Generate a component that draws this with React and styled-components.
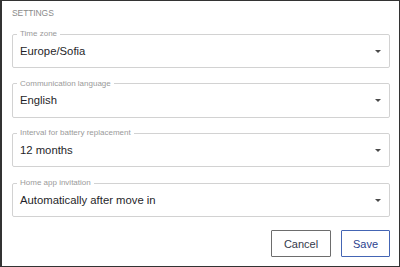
import React from "react"
import styled, { createGlobalStyle } from "styled-components"

const GlobalStyle = createGlobalStyle`
    html, body {
        margin: 0;
        padding: 0;
        background: #ffffff;
    }
    body {
        font-family: "Liberation Sans", Arial, sans-serif;
    }
`

const Panel = styled.div`
    width: 400px;
    height: 267px;
    box-sizing: border-box;
    border: 1px solid #333333;
    border-left-width: 2px;
    background: #ffffff;
    padding: 6px 9px 0 10px;
    display: flex;
    flex-direction: column;
`

const Title = styled.div`
    font-size: 8.5px;
    line-height: 12px;
    color: #8a8a8a;
    letter-spacing: -0.1px;
    height: 12px;
    margin-bottom: 11px;
`

const Fields = styled.div`
    display: flex;
    flex-direction: column;
    gap: 11.7px;
`

const Field = styled.fieldset`
    margin: 0;
    padding: 0 8px 0 4px;
    border: 1px solid #d2d2d2;
    border-radius: 2px;
    min-width: 0;

    legend {
        padding: 0 3px;
        font-size: 8px;
        line-height: 8px;
        color: #9a9a9a;
    }
`

const Row = styled.div`
    height: 33px;
    margin-top: -4px;
    padding-left: 3px;
    display: flex;
    align-items: center;
    justify-content: space-between;
    font-size: 11.3px;
    color: #1f1f2a;
`

const Caret = styled.span`
    width: 0;
    height: 0;
    border-left: 3.5px solid transparent;
    border-right: 3.5px solid transparent;
    border-top: 3.5px solid #4a4a4a;
    margin-top: 1px;
`

const Actions = styled.div`
    display: flex;
    justify-content: flex-end;
    gap: 10px;
    margin-top: 13px;
`

const Button = styled.button`
    height: 27px;
    min-width: ${(p) => (p.$primary ? "49px" : "60px")};
    padding: 0 10px;
    background: #ffffff;
    border: 1px solid ${(p) => (p.$primary ? "#4465b4" : "#6d6d6d")};
    border-radius: 1px;
    font-family: "Liberation Sans", Arial, sans-serif;
    font-size: 11px;
    color: ${(p) => (p.$primary ? "#2b428e" : "#343a4a")};
    cursor: pointer;
`

const fields = [
    { label: "Time zone", value: "Europe/Sofia" },
    { label: "Communication language", value: "English" },
    { label: "Interval for battery replacement", value: "12 months" },
    { label: "Home app invitation", value: "Automatically after move in" },
]

export default function App() {
    return (
        <>
            <GlobalStyle />
            <Panel>
                <Title>SETTINGS</Title>
                <Fields>
                    {fields.map((f) => (
                        <Field key={f.label}>
                            <legend>{f.label}</legend>
                            <Row>
                                <span>{f.value}</span>
                                <Caret />
                            </Row>
                        </Field>
                    ))}
                </Fields>
                <Actions>
                    <Button>Cancel</Button>
                    <Button $primary>Save</Button>
                </Actions>
            </Panel>
        </>
    )
}
